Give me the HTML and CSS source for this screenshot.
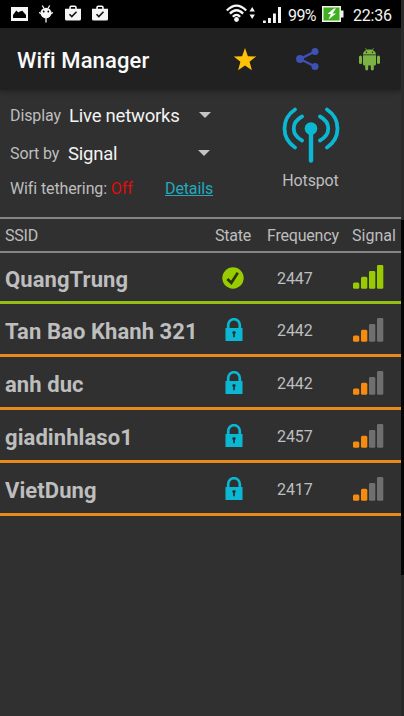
FILE: index.html
```
<!DOCTYPE html>
<html lang="en">
<head>
<meta charset="utf-8">
<title>Wifi Manager</title>
<link rel="stylesheet" href="styles.css">
</head>
<body>
<svg class="defs" width="0" height="0">
  <symbol id="lock" viewBox="0 0 18 24"><path d="M3.200 10V7a5.800 5.800 0 0 1 11.600 0v3" fill="none" stroke="#0bb8d4" stroke-width="2.700"/><path d="M.5 10h17v13H.5z" fill="#0bb8d4"/><circle cx="9" cy="14.600" r="1.700" fill="#24343a"/><path d="M8.100 15h1.800v4.300H8.100z" fill="#24343a"/></symbol>
  <symbol id="bag" viewBox="0 0 16 16"><path d="M5 4V2.500Q5 1.200 6.300 1.200H9.700Q11 1.200 11 2.500V4" fill="none" stroke="#fff" stroke-width="1.500"/><path d="M0 3.700h16V14q0 1.500-1.500 1.500h-13Q0 15.500 0 14z" fill="#f6f6f6"/><path d="M4.500 9.300l2.300 2.300 4.700-4.900" fill="none" stroke="#111" stroke-width="1.500"/></symbol>
  <symbol id="bars" viewBox="0 0 31 24"><rect class="b1" x="0" y="17.500" width="6.300" height="6.300" rx="1.500"/><rect class="b2" x="8" y="11.700" width="6.300" height="12.100" rx="1.500"/><rect class="b3" x="16" y="5.900" width="6.300" height="17.900" rx="1.300"/><rect class="b4" x="24" y="0" width="6.300" height="23.800" rx="1.300"/></symbol>
</svg>
<div class="screen">
  <header class="status">
    <svg class="pic" width="17" height="14" viewBox="0 0 17 14"><path d="M0 0h17v14H0z" fill="#f6f6f6"/><path d="M2 11V8l3.300-4.500 2 2 1.500-1 2.500-.8L15 8v3z" fill="#000"/></svg>
    <svg class="bug" width="14" height="18" viewBox="0 0 14 18"><path d="M3.300.5l1.800 3M10.700.5l-1.800 3M7 12v5.500M1.500 9L.5 7M12.500 9l1-2" stroke="#f6f6f6" stroke-width="1.300"/><ellipse cx="7" cy="8" rx="5.500" ry="5.300" fill="#f6f6f6"/><circle cx="4.700" cy="6.500" r=".9"/><circle cx="9.300" cy="6.500" r=".9"/></svg>
    <svg class="bag" width="16" height="16"><use href="#bag"/></svg>
    <svg class="bag2" width="16" height="16"><use href="#bag"/></svg>
    <svg class="wifi" width="30" height="19" viewBox="0 0 30 19"><g fill="none" stroke="#f6f6f6" stroke-width="2.300"><path d="M.8 6.500Q10.500-3.400 20.200 6.500M3.900 9.600Q10.500 2.900 17.100 9.600M6.800 12.700Q10.500 9 14.200 12.700"/></g><circle cx="10.500" cy="15.500" r="2.400" fill="#f6f6f6"/><path d="M23.500 7.500L26.200 3l2.700 4.500zM23.500 10.500h5.400L26.200 15z" fill="#f6f6f6"/></svg>
    <svg class="cell" width="18" height="16" viewBox="0 0 18 16"><path d="M0 13.500h2.800V16H0zM5 11h2.900v5H5zM10 6.500h2.900V16H10zM15 0h3v16h-3z" fill="#f6f6f6"/></svg>
    <span class="pct">99%</span>
    <svg class="batt" width="22" height="16" viewBox="0 0 22 16"><path d="M0 0h19v4.500h2.500v7H19V16H0z" fill="#f0f4e8"/><path d="M1.500 1.500h16v13h-16z" fill="#3fae20"/><path d="M11.800 2.500L5.500 8h3.300l-2.300 5.500 7.500-6h-3.500L14 2.500z" fill="#fff"/></svg>
    <span class="clock">22:36</span>
  </header>
  <div class="appbar">
    <h1>Wifi Manager</h1>
    <svg class="star" width="24" height="23" viewBox="0 0 24 23"><path d="M12 0l2.900 8.200 8.300.2-6.600 5.400 2.300 8.500-6.900-4.700-6.900 4.700 2.300-8.500L.8 8.400l8.300-.2z" fill="#ffc107"/></svg>
    <svg class="share" width="23" height="22" viewBox="0 0 23 22"><path d="M19 3.500L4 11l15 7.500" fill="none" stroke="#3f51b5" stroke-width="2.300"/><g fill="#3f51b5"><circle cx="19" cy="3.600" r="3.500"/><circle cx="4" cy="11" r="3.900"/><circle cx="19" cy="18.400" r="3.500"/></g></svg>
    <svg class="droid" width="21" height="23" viewBox="0 0 21 23"><g fill="#7cb342"><path d="M4 7.300h13V16q0 1.500-1.500 1.500h-10Q4 17.500 4 16zM4 6.500C4 3.500 7 1.500 10.500 1.500S17 3.500 17 6.500z"/><rect x="0" y="7.500" width="3" height="8.500" rx="1.500"/><rect x="18" y="7.500" width="3" height="8.500" rx="1.500"/><rect x="6.200" y="16" width="3" height="6.500" rx="1.400"/><rect x="11.800" y="16" width="3" height="6.500" rx="1.400"/></g><path d="M6.500.3l1.700 2.500M14.500.3l-1.700 2.500" stroke="#7cb342" stroke-width=".8"/><circle cx="7.500" cy="4.300" r=".7" fill="#222"/><circle cx="13.500" cy="4.300" r=".7" fill="#222"/></svg>
  </div>
  <section class="panel">
    <div class="controls">
      <div class="line display"><span class="label">Display</span><span class="value">Live networks</span><i class="caret"></i></div>
      <div class="line sort"><span class="label">Sort by</span><span class="value">Signal</span><i class="caret"></i></div>
      <div class="line tether"><span class="tl">Wifi tethering: <b>Off</b></span><a>Details</a></div>
    </div>
    <div class="hotspot">
      <svg width="58" height="56" viewBox="0 0 58 56"><g fill="none" stroke="#0bb8d4" stroke-linecap="round" stroke-width="3.800"><path d="M13 2.500C-1 12-1 31 13 40.500M45 2.500C59 12 59 31 45 40.500M20 9.500C9 15.500 9 27.500 20 33.500M38 9.500C49 15.500 49 27.500 38 33.500"/><path d="M29 22v31.500" stroke-width="4.400"/></g><circle cx="29" cy="21.500" r="6.300" fill="#0bb8d4"/></svg>
      <span>Hotspot</span>
    </div>
  </section>
  <div class="head"><span class="h1">SSID</span><span class="h2">State</span><span class="h3">Frequency</span><span class="h4">Signal</span></div>
  <div class="row on"><span class="name">QuangTrung</span><svg class="ok" width="22" height="22" viewBox="0 0 22 22"><circle cx="11" cy="11" r="10.700" fill="#99cc00"/><path d="M5.300 12l4 3.800 6.500-10" fill="none" stroke="#2c3511" stroke-width="2.700"/></svg><span class="freq">2447</span><svg class="bars" width="31" height="24"><use href="#bars"/></svg></div>
  <div class="row"><span class="name">Tan Bao Khanh 321</span><svg class="lock" width="18" height="24"><use href="#lock"/></svg><span class="freq">2442</span><svg class="bars" width="31" height="24"><use href="#bars"/></svg></div>
  <div class="row"><span class="name">anh duc</span><svg class="lock" width="18" height="24"><use href="#lock"/></svg><span class="freq">2442</span><svg class="bars" width="31" height="24"><use href="#bars"/></svg></div>
  <div class="row"><span class="name">giadinhlaso1</span><svg class="lock" width="18" height="24"><use href="#lock"/></svg><span class="freq">2457</span><svg class="bars" width="31" height="24"><use href="#bars"/></svg></div>
  <div class="row"><span class="name">VietDung</span><svg class="lock" width="18" height="24"><use href="#lock"/></svg><span class="freq">2417</span><svg class="bars" width="31" height="24"><use href="#bars"/></svg></div>
</div>
<div class="edge"></div>
</body>
</html>
```
FILE: styles.css
```
* { box-sizing: border-box; }
body { margin: 0; width: 404px; height: 716px; overflow: hidden; display: flex; background: #303030; color: #bebebe; font: 16px/20px Roboto, sans-serif; }
.defs { display: none; }
svg { display: block; flex: none; }
span, a { white-space: nowrap; }
.screen { width: 399px; flex: none; width: 401px; height: 716px; background: #303030; }
.edge { width: 3px; background: linear-gradient(#2b2b2b 220px, #060606 220px 575px, #272727 575px); }

.status { height: 28px; background: #000; display: flex; align-items: flex-start; color: #f4f4f4; }
.pic { margin: 7px 0 0 11px; }
.bug { margin: 5px 0 0 11px; }
.bag { margin: 5px 0 0 12px; }
.bag2 { margin: 5px 0 0 11px; }
.wifi { margin: 4px 0 0 118px; }
.cell { margin: 7px 0 0 7px; }
.pct { margin: 6px 0 0 7px; width: 29px; font-size: 16px; letter-spacing: -.6px; }
.batt { margin: 6px 0 0 5px; }
.clock { margin: 6px 0 0 9px; font-size: 16px; letter-spacing: -.2px; }

.appbar { height: 62px; background: #212121; display: flex; box-shadow: 0 2px 5px rgba(0, 0, 0, .28); }
h1 { margin: 20px 0 0 17px; width: 132px; font: 500 22px/26px Roboto, sans-serif; letter-spacing: .1px; color: #fafafa; white-space: nowrap; }
.star { margin: 20px 0 0 84px; }
.share { margin: 20px 0 0 39px; }
.droid { margin: 20px 0 0 40px; }

.panel { height: 127px; display: flex; }
.controls { width: 220px; padding: 14px 0 0 10px; }
.line { display: flex; align-items: center; height: 24px; }
.label { width: 59px; letter-spacing: -.12px; }
.sort { margin-top: 14px; }
.sort .label { width: 58px; }
.value { width: 130px; font-size: 18.500px; letter-spacing: -.22px; color: #f3f3f3; }
.caret { margin-bottom: 2px; border: 6px solid transparent; border-top-color: #c4c4c4; border-bottom: 0; }
.tether { margin-top: 11px; }
.tl { width: 155px; letter-spacing: -.12px; }
.tl b { font-weight: 400; color: #e00b0b; }
a { color: #22a9bd; text-decoration: underline; letter-spacing: -.12px; }
.hotspot { width: 181px; padding-top: 17px; display: flex; flex-direction: column; align-items: center; }
.hotspot span { margin-top: 8px; letter-spacing: -.15px; }

.head { height: 36px; padding-top: 2px; border-top: 2px solid #858585; border-bottom: 2px solid #858585; display: flex; align-items: center; letter-spacing: -.2px; }
.h1 { width: 210px; margin-left: 5px; }
.h2 { width: 52px; }
.h3 { width: 85px; }
.h4 { letter-spacing: 0; }

.row { --lit: #f78b0d; --dim: #6f6f6f; height: 53px; padding-top: 2px; border-bottom: 3px solid #e98b1c; display: flex; align-items: center; }
.row.on { --lit: #99cc00; --dim: #99cc00; height: 51px; border-bottom-color: #94be14; }
.name { width: 220px; margin-left: 5px; padding-top: 3px; font-size: 22px; font-weight: 700; line-height: 28px; letter-spacing: .08px; }
.on .name { width: 217px; }
.lock { margin-right: 34px; }
.ok { margin-right: 33px; }
.freq { width: 76px; padding-top: 2px; letter-spacing: -.1px; }
.on .bars { margin-bottom: 2px; }
.b1, .b2 { fill: var(--lit); }
.b3, .b4 { fill: var(--dim); }
```
